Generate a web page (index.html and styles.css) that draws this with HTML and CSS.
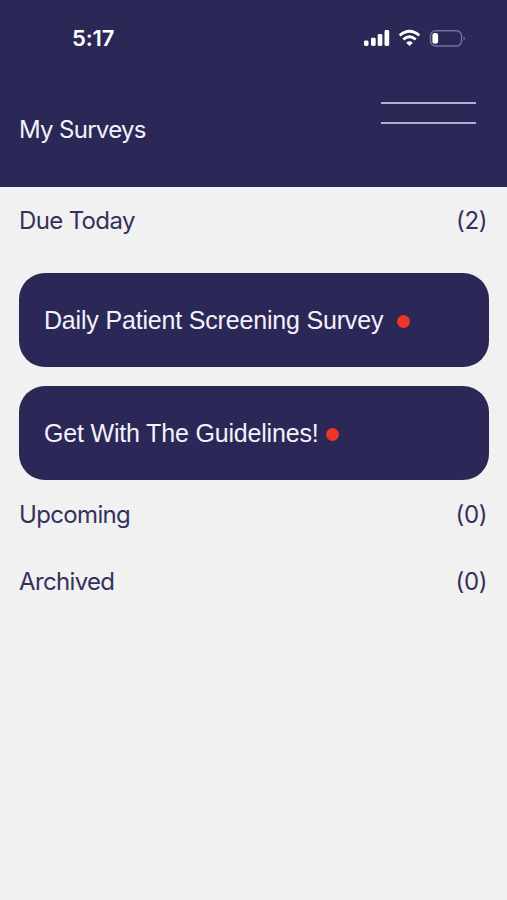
FILE: index.html
```html
<!DOCTYPE html>
<html lang="en">
<head>
<meta charset="utf-8">
<title>My Surveys</title>
<link rel="stylesheet" href="styles.css">
</head>
<body>
<header class="header">
  <div class="status">
    <span class="time">5:17</span>
    <svg class="indicators" width="104" height="20" viewBox="0 0 104 20">
      <g fill="#fff">
        <rect x="1" y="12.5" width="4.5" height="5.5" rx="1.4"/>
        <rect x="8" y="9.700" width="4.700" height="8.300" rx="1.4"/>
        <rect x="14.7" y="6" width="4.700" height="12" rx="1.4"/>
        <rect x="21.5" y="2" width="4.700" height="16" rx="1.4"/>
        <rect x="69.4" y="5" width="5.7" height="10.700" rx="2.300"/>
      </g>
      <g fill="none" stroke="#fff" stroke-width="2.900">
        <path d="M36.700 7.500Q46.500 -0.800 56.300 7.500"/>
        <path d="M40.300 11.500Q46.500 6.200 52.700 11.500"/>
      </g>
      <path d="M43.200 14.700Q46.500 12 49.800 14.700L46.500 18Z" fill="#fff"/>
      <rect x="67.500" y="2.700" width="31" height="15.300" rx="5" fill="none" stroke="#75719a" stroke-width="1.400"/>
      <path d="M100.500 8Q103.500 10.300 100.500 12.700Z" fill="#75719a"/>
    </svg>
  </div>
  <div class="titlebar">
    <h1 class="title">My Surveys</h1>
    <div class="menu"></div>
  </div>
</header>
<main class="content">
  <h2 class="section"><span>Due Today</span><span class="count">(2)</span></h2>
  <div class="cards">
    <div class="card"><span>Daily Patient Screening Survey</span><i class="dot"></i></div>
    <div class="card"><span>Get With The Guidelines!</span><i class="dot near"></i></div>
  </div>
  <h2 class="section"><span>Upcoming</span><span class="count">(0)</span></h2>
  <h2 class="section"><span>Archived</span><span class="count">(0)</span></h2>
</main>
</body>
</html>
```
FILE: styles.css
```css
* { box-sizing: border-box; }
body { margin: 0; min-height: 900px; background: #f1f1f2; color: #35305c; font-family: Inter, sans-serif; }
.header { height: 187px; background: #2b2757; color: #fff; }
.status { height: 76px; padding: 0 40px 0 72px; display: flex; align-items: center; justify-content: space-between; }
.time { font-size: 22px; font-weight: 600; letter-spacing: -0.15px; }
.titlebar { display: flex; justify-content: space-between; padding: 25px 31px 0 19px; }
.title { margin: 14px 0 0; font-size: 24px; line-height: 30px; font-weight: 400; letter-spacing: -0.7px; white-space: nowrap; color: #f3f2fa; }
.menu { width: 95px; height: 22px; border-top: 2px solid #b3afd4; border-bottom: 2px solid #b3afd4; margin-top: 0.5px; }
.section { margin: 0; height: 67.500px; padding: 0 20px 0 19px; display: flex; justify-content: space-between; align-items: center; font-size: 24px; font-weight: 400; letter-spacing: -0.65px; }
.count { letter-spacing: -0.4px; }
.cards { display: grid; gap: 19px; padding: 18.500px 18px 0.500px 19px; }
.card { height: 94px; border-radius: 26px; background: #2b2757; color: #f3f2fa; padding: 0 25px; display: flex; align-items: center; font: 25px "Liberation Sans", sans-serif; letter-spacing: -0.18px; }
.dot { width: 13px; height: 13px; border-radius: 50%; background: #ea3728; margin: 3px 0 0 14px; }
.near { margin-left: 7.500px; }
```
